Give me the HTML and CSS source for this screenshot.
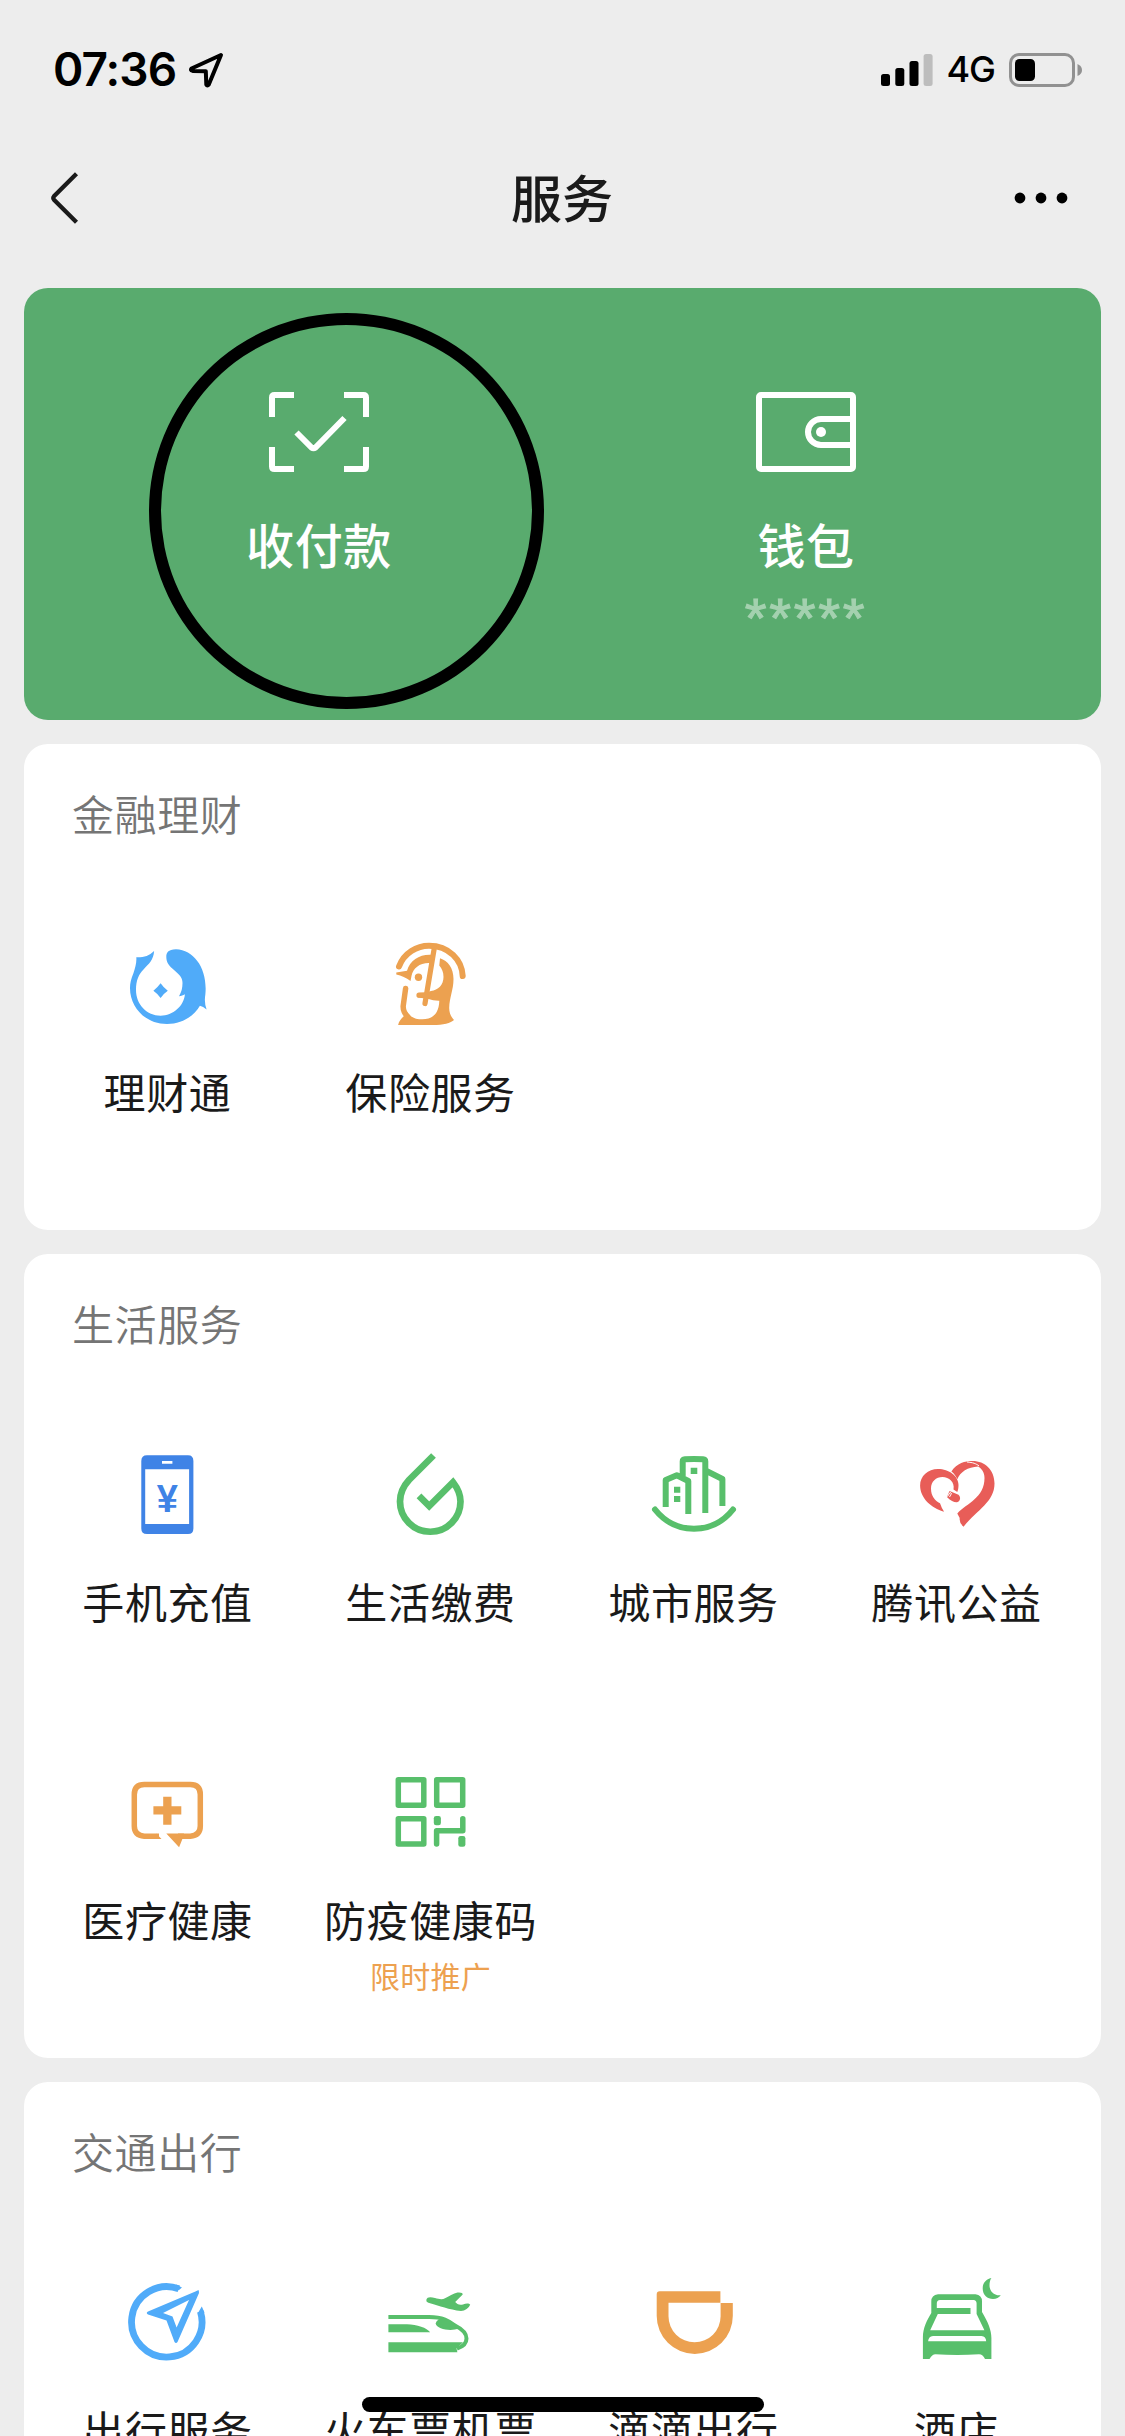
FILE: index.html
```html
<!DOCTYPE html>
<html lang="zh-CN">
<head>
<meta charset="utf-8">
<title>服务</title>
<link rel="stylesheet" href="styles.css">
</head>
<body>
<div class="screen">
  <header class="status">
    <div class="status-left">
      <span class="time">07:36</span>
      <svg class="location" viewBox="0 0 36 36"><path d="M33 3 L3.500 16.500 Q2 18.500 4.500 18.900 L17.800 19.200 L18.300 32.500 Q19.300 34.500 20.800 32.500 Z" fill="none" stroke="#000" stroke-width="4" stroke-linejoin="round"/></svg>
    </div>
    <div class="status-right">
      <svg class="signal" viewBox="0 0 52 34"><rect x="0" y="21" width="9" height="12" rx="2.500"/><rect x="14.300" y="15" width="9" height="18" rx="2.500"/><rect x="28.500" y="8" width="9" height="25" rx="2.500"/><rect x="42.600" y="1" width="9" height="32" rx="2.500" fill="#bdbdbd"/></svg>
      <span class="network">4G</span>
      <svg class="battery" viewBox="0 0 74 34"><rect x="1.500" y="1.500" width="63" height="31" rx="8.500" fill="none" stroke="#919191" stroke-width="3"/><rect x="6" y="6" width="20" height="22" rx="4.500"/><path d="M68.500 11 Q73 13 73 17 T68.500 23Z" fill="#919191"/></svg>
    </div>
  </header>
  <nav class="navbar">
    <svg class="back" viewBox="0 0 30 52"><path d="M27.500 1.800 L5 24.300 Q3.600 26 5 27.700 L27.500 50.200" fill="none" stroke="#1a1a1a" stroke-width="4.300"/></svg>
    <h1 class="title">服务</h1>
    <svg class="more" viewBox="0 0 54 12"><circle cx="6" cy="6" r="5.400"/><circle cx="27" cy="6" r="5.400"/><circle cx="48" cy="6" r="5.400"/></svg>
  </nav>

  <main class="cards">
    <section class="card pay">
      <div class="pay-item">
        <svg class="pay-icon" viewBox="0 0 100 80" fill="none" stroke="#fff" stroke-width="6"><path d="M25 3H5.500Q3 3 3 5.500V25M75 3H94.500Q97 3 97 5.500V25M25 77H5.500Q3 77 3 74.500V55M75 77H94.500Q97 77 97 74.500V55"/><path d="M27.500 40.500 42.500 55.500Q44.500 57 46.500 55.500L75.500 26"/></svg>
        <span class="pay-label">收付款</span>
      </div>
      <div class="pay-item">
        <svg class="pay-icon" viewBox="0 0 100 80" fill="none" stroke="#fff" stroke-width="6"><rect x="3" y="3" width="94" height="74" rx="2"/><path d="M97 27H65A13 13 0 0 0 65 53H97"/><circle cx="65" cy="40" r="5" fill="#fff" stroke="none"/></svg>
        <span class="pay-label">钱包</span>
        <span class="balance">*****</span>
      </div>
      <div class="ring"></div>
    </section>

    <section class="card finance">
      <h2 class="heading">金融理财</h2>
      <div class="grid">
        <div class="item">
          <svg class="icon blue" viewBox="0 0 90 90"><path d="M32.100 11C27 16 22 17.500 14.300 17.300C14.800 23 13 28 11.500 33C9 39 8 43 8 48C8 68 24 84 45 84C60 84 72 76 77.900 65.700Q81 66.500 84.600 69.500Q82 62 83.300 55C86 30 73 10 54 9.300C46 9.300 44.300 13 44.300 17C44.300 23 47.500 26 52 30C58.500 35.500 60.500 38 60.500 43C60.500 48 59.500 52 57 56.300C59.500 56 61 55.500 62.900 54.300C62 66 51 75.700 38.600 75.700C25 75.700 14 64.500 14 50C14 40 17 34 21.500 29.500C27 23.500 31.500 20 32.100 11Z"/><path d="M38.600 43.300Q41 47 45.800 50.700Q41 54 38.600 58Q36 54 31.400 50.700Q36 47 38.600 43.300Z"/></svg>
          <span class="label">理财通</span>
        </div>
        <div class="item">
          <svg class="icon orange" viewBox="0 0 90 90"><path d="M11.300 32.500 22 30.700C25 20 35 14 46.500 14.800L45 23C35 22.500 28 28 26.500 36L25.500 41Q19 36 11.300 34.500Z"/><path d="M55 18.300C63 21 68.500 28 68.500 39C68.500 50 64.500 57 64.200 68C64.200 73 66 77 69 80C66 83 58 85 48 85H13.100C14 81 16 79 18.500 76.500L22 72C26 78 31 79.300 37.400 79.300C48 79.300 54 73 54.300 60.700Q48 60.800 43.500 59L33 57.500V53L41 52.500 46 51C53 50 58.500 45 58.500 37C58.500 32 57 29 54.300 25.500Z"/><g class="line round"><path stroke-width="6" d="M14 26.500C19 13 32 5.700 44 5.700C64 5.700 77 20 77.700 36"/><path stroke-width="5.500" d="M20.600 48.500 18.200 66C18 70 20 74 23 77"/><path stroke-width="5.200" d="M49.300 8 40 63.500M34 55.200H44"/></g><circle cx="33.500" cy="37.300" r="3.700"/></svg>
          <span class="label">保险服务</span>
        </div>
      </div>
    </section>

    <section class="card life">
      <h2 class="heading">生活服务</h2>
      <div class="grid">
        <div class="item">
          <svg class="icon phone" viewBox="0 0 90 90"><path fill-rule="evenodd" d="M25 5.300H66Q71.400 5.300 71.400 11V78.500Q71.400 84 66 84H25Q19.300 84 19.300 78.500V11Q19.300 5.300 25 5.300ZM23.200 19.300V74H67.100V19.300ZM40 11V13.700H50.400V11Z"/><text class="yen" x="45.400" y="61.700" text-anchor="middle">¥</text></svg>
          <span class="label">手机充值</span>
        </div>
        <div class="item">
          <svg class="icon green" viewBox="0 0 90 90"><path class="line" stroke-width="6.700" d="M48.500 5.500 24 30C18 36.500 15 43.500 15 51.500A30.200 30.200 0 0 0 75.500 51.500C75.500 44.500 72.500 38 68 32.200L44.200 56 34 45.800"/></svg>
          <span class="label">生活缴费</span>
        </div>
        <div class="item">
          <svg class="icon green" viewBox="0 0 90 90"><g class="line" stroke-width="6" stroke-linejoin="round"><path d="M17.700 57V30L28.800 25.300 40.300 31V64M34.700 29V11.500Q34.700 9.500 37 9.300Q46 8.500 55 9.300Q57.300 9.500 57.300 11.500V63M57.500 20.500 74.400 29V56"/><path stroke-linecap="round" d="M7 59.500C17 72 31 78.700 46 78.700S75 72 85 59.500"/></g><path d="M42.700 17.700h6.600V24h-6.600zM26 36.700h6.300v6H26zM26 46h6.300v6H26z"/></svg>
          <span class="label">城市服务</span>
        </div>
        <div class="item">
          <svg class="icon red" viewBox="0 0 90 90"><path d="M33.100 61.700C20 58 9.100 48 9.100 35.500C9.100 26 17 19 27 19C38 19 47.500 26 47.500 35C47.500 38 47 40 46.300 42L42.500 39.500C44 32 38 27 31.500 27C25 27 20 31.500 20 38.500C20 46 24 51 29 53.300Q30.500 58 33.100 61.700Z"/><path d="M38.500 41 47.500 44.800C50 47 49.500 51.500 46 52.300C43 52.500 40 51 35.900 47Z"/><path d="M40.400 21.500C46 13 54 11 61.500 11C74 11 83.500 20 83.500 33.500C83.500 52 66 60 52.600 76.700Q48 73 48.700 68L46.300 63.500C56 53 73.500 48 73.500 28C73.500 22 70.500 18.500 67 16.500C57 17 49 22 46.300 29.300C45 26 43 23.500 40.400 21.500Z"/><path d="M56 12C62 12.500 65 13.500 68 16M36.500 46.500 39 42.500 40.500 43.500 38.500 47" fill="none" stroke="#fff" stroke-width="1"/></svg>
          <span class="label">腾讯公益</span>
        </div>
        <div class="item">
          <svg class="icon orange" viewBox="0 0 90 90"><path class="line" stroke-width="5.500" d="M37 68.300H22.300Q12.300 67.500 12.300 58V26.500Q12.300 16.500 22.300 16.500H68.300Q78.300 16.500 78.300 26.500V58Q78.300 67.500 68.300 68.300H56"/><path d="M44.300 65.600H62L60.400 71 57.100 79.300ZM34.300 65.600 39.500 71H34Z"/><path d="M41.200 28.700h8.300v9.500h9.800v8.300h-9.800v10.200h-8.300V46.500h-9.800v-8.300h9.800z"/></svg>
          <span class="label">医疗健康</span>
        </div>
        <div class="item">
          <svg class="icon green" viewBox="0 0 90 90"><g class="line" stroke-width="5.500" stroke-linejoin="round"><path d="M13.300 11.700h25.500v25.500H13.300zM51.700 11.700h26v25.500h-26zM13.300 50.700h25.500V76H13.300z"/><path stroke-linecap="round" d="M51.600 76V62.800H77.800V50.800"/></g><rect x="48.800" y="48" width="7.100" height="9.300" rx="2.300"/><rect x="73.300" y="68" width="7.100" height="10.700" rx="2.300"/></svg>
          <span class="label">防疫健康码</span>
          <span class="promo">限时推广</span>
        </div>
      </div>
    </section>

    <section class="card travel">
      <h2 class="heading">交通出行</h2>
      <div class="grid">
        <div class="item">
          <svg class="icon blue" viewBox="0 0 90 90"><path class="line" stroke-width="6.800" d="M56.800 10.800A35.200 35.200 0 1 0 78.400 33.500"/><path d="M54 6.500 60 9.500 57 12 54.500 12.500ZM79.800 28.500 82.500 34.500 76 38 76.500 34Z"/><path fill-rule="evenodd" d="M76.800 12.300Q76 12 74 13.300L26 33.500Q23.500 35 26 36.500L44.500 42.500 52.500 64Q54 66 55.500 64L77 15ZM67 22 54.600 49.500 50.500 38.500 41 35Z"/></svg>
          <span class="label">出行服务</span>
        </div>
        <div class="item">
          <svg class="icon green" viewBox="0 0 90 90"><path d="M41.300 22C42 18.500 46 19 50 20C54 21 57 22 60.500 20C66 17 70 14.500 74 14.500Q78 14.500 77.700 16.500L70.200 24C72 26 74 27.500 78 26.500C81 25 84 25 85.200 26.500C84 30 80 33 76 33C64 31.500 55 28 43.400 24.700Q41 24 41.300 22Z"/><path class="line" stroke-width="4" d="M3.400 39H44C58 39 64 43 70 47.500C77 51 81.500 55 81.500 60.500C81.500 66 77 69 72 70.500"/><path d="M50.600 45.500C52 41 57 40 62 41.500L74 50.500C66 53.500 52 51.500 50.600 45.500ZM3.400 46.300H22C32 46.300 42 50 45.200 54.300H3.400ZM3.400 64.300H78L71.500 70.500 72.400 74.300H3.400Z"/></svg>
          <span class="label">火车票机票</span>
        </div>
        <div class="item">
          <svg class="icon orange" viewBox="0 0 90 90"><path d="M11.700 13.300H72.400V24.700H20.500V38.300A26 26 0 0 0 72.600 38.300V24.900H84.800V38A38.050 38 0 0 1 8.700 38V16.300Q8.700 13.300 11.700 13.300Z"/></svg>
          <span class="label">滴滴出行</span>
        </div>
        <div class="item">
          <svg class="icon green" viewBox="0 0 90 90"><path fill-rule="evenodd" d="M27 16.300H64.500Q71 17 71 23.500V34C77 44 80.400 52 80.400 60V81H74Q72 76.500 68 76.300Q46 77.500 24.500 76.300Q21 76.500 18.500 81H11.900V59C12 50 16 42 20.300 35V23.500Q20.300 17 27 16.300ZM25.800 30H59.500V36H26.800L19.200 52.300H73.400L65.600 36V25.500Q65.500 22.300 62.500 22H29Q25.800 22.300 25.800 25.500ZM17.100 63.300H75.200Q75 58.500 70.500 58H22Q17.500 58.500 17.100 63.300Z"/><path d="M80.400 0C75 1 71.700 5 71.700 10.500C71.700 17 76.500 21 82 21C85.500 21 88 19.500 89.800 17.300C83 18 78.500 13 78.500 7.500C78.500 4.500 79 2 80.400 0Z"/></svg>
          <span class="label">酒店</span>
        </div>
      </div>
    </section>
  </main>
  <div class="home-bar"></div>
</div>
</body>
</html>
```
FILE: styles.css
```css
* { box-sizing: border-box; }

body {
  margin: 0;
  background: #ededed;
  color: #1a1a1a;
  font-family: "Noto Sans CJK SC", sans-serif;
}

.screen {
  position: relative;
  width: 1125px;
  height: 2436px;
  overflow: hidden;
}

.status {
  display: flex;
  justify-content: space-between;
  height: 132px;
  padding: 52px 42px 0 53px;
  color: #000;
  font-family: Inter, sans-serif;
}
.status-left, .status-right { display: flex; height: 35px; align-items: center; }
.time { font-size: 46px; font-weight: 600; line-height: 35px; letter-spacing: -0.9px; }
.location { width: 36px; height: 36px; margin-left: 12px; }
.signal { width: 52px; height: 34px; margin-right: 13px; }
.network { font-size: 36px; font-weight: 450; letter-spacing: -1px; line-height: 37px; }
.battery { width: 74px; height: 34px; margin-left: 14px; }

.navbar {
  display: grid;
  grid-template-columns: 1fr auto 1fr;
  align-items: center;
  height: 132px;
  padding: 0 57px 0 49px;
}
.back { width: 30px; height: 52px; }
.title { margin: -4px 0 0 7px; font-size: 51px; font-weight: 500; line-height: 72px; }
.more { width: 54px; height: 12px; justify-self: end; }

.cards {
  display: flex;
  flex-direction: column;
  gap: 24px;
  padding: 24px 24px 0;
}
.card {
  flex: none;
  border-radius: 24px;
  background: #fff;
}

.pay {
  position: relative;
  display: grid;
  grid-template-columns: 487px 487px;
  justify-content: center;
  height: 432px;
  background: #59ab6e;
  color: #fff;
}
.pay-item { display: flex; flex-direction: column; align-items: center; padding-top: 104px; }
.pay-icon { width: 100px; height: 80px; }
.pay-label { margin-top: 35px; font-size: 48px; font-weight: 500; line-height: 72px; letter-spacing: 0.6px; }
.balance {
  height: 78px;
  opacity: 0.45;
  font-family: "Liberation Sans", sans-serif;
  font-size: 56px;
  line-height: 78px;
  letter-spacing: 2.7px;
  -webkit-text-stroke: 1px #fff;
}
.ring {
  position: absolute;
  left: 125px;
  top: 25px;
  width: 395px;
  height: 396px;
  border: 12.5px solid #000;
  border-radius: 50%;
}

.finance { height: 486px; }
.life { height: 804px; }
.travel { height: 486px; }

.heading {
  margin: 0;
  padding: 39px 48px 0;
  color: #757575;
  font-size: 42px;
  font-weight: 350;
  line-height: 60px;
  letter-spacing: 0.6px;
}
.grid {
  display: grid;
  grid-template-columns: repeat(4, 263px);
  grid-auto-rows: 318px;
  padding: 97px 0 0 12px;
}
.item { display: flex; flex-direction: column; align-items: center; }
.icon { width: 90px; height: 90px; margin-right: 1px; overflow: visible; fill: currentColor; }
.label { margin-top: 31px; font-size: 42px; line-height: 60px; letter-spacing: 0.6px; white-space: nowrap; }
.promo { margin-top: 4px; color: #eda150; font-size: 30px; line-height: 44px; letter-spacing: 0.3px; }

.line { fill: none; stroke: currentColor; }
.round { stroke-linecap: round; stroke-linejoin: round; }
.blue { color: #50abf9; }
.phone { color: #3f83e6; }
.green { color: #58bf6b; }
.orange { color: #eca150; }
.red { color: #e85d58; }
.yen { font-family: "Liberation Sans", sans-serif; font-size: 38px; font-weight: 700; }

.home-bar {
  position: absolute;
  left: 362px;
  top: 2397px;
  width: 402px;
  height: 15px;
  border-radius: 8px;
  background: #000;
}
```
